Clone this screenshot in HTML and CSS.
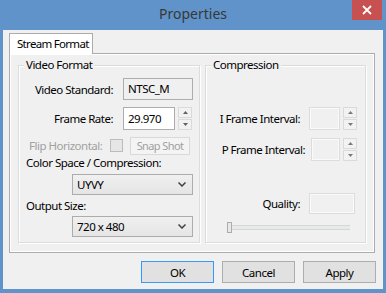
FILE: index.html
```html
<!DOCTYPE html>
<html lang="en">
<head>
    <meta charset="UTF-8">
    <title>Properties</title>
    <link rel="stylesheet" href="styles.css">
</head>
<body>
    <div class="window">
        <div class="titlebar">
            <span class="title">Properties</span>
            <button class="close">
                <svg width="10" height="10" viewBox="0 0 10 10"><path d="M1 1L9 9M9 1L1 9" stroke="#fff" stroke-width="1.8"/></svg>
            </button>
        </div>
        <div class="client">
            <div class="tabs">
                <div class="tab">Stream Format</div>
            </div>
            <div class="panel">
                <fieldset class="group video">
                    <legend>Video Format</legend>
                    <div class="row r-std">
                        <span class="lbl">Video Standard:</span>
                        <span class="box readonly">NTSC_M</span>
                    </div>
                    <div class="row r-rate">
                        <span class="lbl">Frame Rate:</span>
                        <span class="box edit">29.970</span>
                        <span class="spin">
                            <span class="spin-btn"><svg width="5" height="3"><path d="M0 3H5L2.5 0z" fill="#606060"/></svg></span>
                            <span class="spin-btn"><svg width="5" height="3"><path d="M0 0H5L2.5 3z" fill="#606060"/></svg></span>
                        </span>
                    </div>
                    <div class="row r-flip">
                        <span class="lbl dim">Flip Horizontal:</span>
                        <span class="check"></span>
                        <span class="btn small dim">Snap Shot</span>
                    </div>
                    <div class="caption">Color Space / Compression:</div>
                    <div class="combo first">UYVY
                        <svg width="8" height="5"><path d="M0.5 0.5L4 4L7.5 0.5" fill="none" stroke="#404040" stroke-width="1.5"/></svg>
                    </div>
                    <div class="caption out">Output Size:</div>
                    <div class="combo">720 x 480
                        <svg width="8" height="5"><path d="M0.5 0.5L4 4L7.5 0.5" fill="none" stroke="#404040" stroke-width="1.5"/></svg>
                    </div>
                </fieldset>
                <fieldset class="group compression">
                    <legend>Compression</legend>
                    <div class="row r-iframe">
                        <span class="lbl">I Frame Interval:</span>
                        <span class="box off"></span>
                        <span class="spin">
                            <span class="spin-btn"><svg width="5" height="3"><path d="M0 3H5L2.5 0z" fill="#7a7a7a"/></svg></span>
                            <span class="spin-btn"><svg width="5" height="3"><path d="M0 0H5L2.5 3z" fill="#7a7a7a"/></svg></span>
                        </span>
                    </div>
                    <div class="row r-pframe">
                        <span class="lbl">P Frame Interval:</span>
                        <span class="box off"></span>
                        <span class="spin">
                            <span class="spin-btn"><svg width="5" height="3"><path d="M0 3H5L2.5 0z" fill="#7a7a7a"/></svg></span>
                            <span class="spin-btn"><svg width="5" height="3"><path d="M0 0H5L2.5 3z" fill="#7a7a7a"/></svg></span>
                        </span>
                    </div>
                    <div class="row r-quality">
                        <span class="lbl">Quality:</span>
                        <span class="box off"></span>
                    </div>
                    <div class="slider">
                        <span class="thumb"></span>
                    </div>
                </fieldset>
            </div>
            <div class="actions">
                <span class="btn default">OK</span>
                <span class="btn">Cancel</span>
                <span class="btn">Apply</span>
            </div>
        </div>
    </div>
</body>
</html>
```

FILE: styles.css
```css
body {
    margin: 0;
    font-family: "Noto Sans", sans-serif;
    font-size: 11.5px;
    letter-spacing: -0.5px;
    color: #000;
    white-space: nowrap;
}
.window {
    width: 386px;
    height: 293px;
    box-sizing: border-box;
    background: #5f93c9;
    padding: 0 3px 4px 3px;
    display: flex;
    flex-direction: column;
}
.titlebar {
    height: 30px;
    display: grid;
    grid-template-columns: 1fr auto 1fr;
    align-items: start;
}
.title {
    grid-column: 2;
    font-size: 14px;
    letter-spacing: 0;
    line-height: 20px;
    margin-top: 4px;
    color: #383838;
}
.close {
    grid-column: 3;
    justify-self: end;
    width: 30px;
    height: 20px;
    margin-right: 1px;
    padding: 0;
    border: 0;
    background: #c75050;
    display: flex;
    align-items: center;
    justify-content: center;
}
.client {
    flex: 1;
    background: #f0f0f0;
    padding: 3px 7px 0 6px;
}
.tabs {
    display: flex;
    height: 20px;
}
.tab {
    position: relative;
    z-index: 1;
    width: 84px;
    height: 21px;
    box-sizing: border-box;
    background: #fff;
    border: 1px solid #acacac;
    border-bottom: 0;
    padding-left: 7px;
    line-height: 19px;
    letter-spacing: -0.7px;
}
.panel {
    width: 366px;
    height: 200px;
    box-sizing: border-box;
    border: 1px solid #acacac;
    box-shadow: inset 0 0 0 1px #fff;
    display: flex;
    gap: 5px;
    padding: 3px 8px 9px 8px;
}
.group {
    margin: 0;
    padding: 5px 0 0 0;
    min-width: 0;
    border: 1px solid #dcdcdc;
    box-shadow: inset 1px 1px 0 #fff, 1px 1px 0 #fff;
    box-sizing: border-box;
}
.group legend {
    margin-left: 5px;
    padding: 0 2px;
    line-height: 16px;
    background: #f0f0f0;
}
.video {
    width: 182px;
}
.compression {
    width: 161px;
}
.row {
    display: flex;
    align-items: center;
}
.lbl {
    width: 94px;
    text-align: right;
    flex: none;
}
.box {
    box-sizing: border-box;
    flex: none;
    line-height: 20px;
}
.r-std {
    height: 22px;
}
.r-std .lbl, .r-rate .lbl {
    margin-right: 10px;
}
.readonly {
    width: 70px;
    height: 22px;
    border: 1px solid #adadad;
    background: #f0f0f0;
    padding-left: 4px;
}
.r-rate {
    margin-top: 7px;
    height: 23px;
}
.edit {
    width: 52px;
    height: 23px;
    border: 1px solid #abadb3;
    background: #fff;
    padding-left: 4px;
    line-height: 21px;
}
.spin {
    margin-left: 3px;
    width: 14px;
    height: 23px;
    display: flex;
    flex-direction: column;
    gap: 1px;
}
.spin-btn {
    flex: 1;
    border: 1px solid #dadada;
    background: #f2f2f2;
    display: flex;
    align-items: center;
    justify-content: center;
}
.spin-btn svg {
    display: block;
}
.r-flip {
    margin-top: 7px;
    height: 17px;
}
.r-flip .lbl {
    width: 91px;
    box-sizing: border-box;
    padding-left: 10px;
    text-align: left;
}
.dim {
    color: #a0a0a0;
}
.check {
    width: 13px;
    height: 13px;
    box-sizing: border-box;
    border: 1px solid #bcbcbc;
    background: #e6e6e6;
    margin-right: 7px;
}
.btn {
    width: 73px;
    height: 22px;
    box-sizing: border-box;
    border: 1px solid #adadad;
    background: #e1e1e1;
    display: flex;
    align-items: center;
    justify-content: center;
}
.btn.small {
    width: 60px;
    height: 18px;
    border-color: #d9d9d9;
    background: #f4f4f4;
    font-size: 11px;
    letter-spacing: -0.6px;
}
.btn.default {
    border-color: #3399ff;
}
.caption {
    margin-top: 1px;
    padding-left: 7px;
    line-height: 16px;
}
.caption.out {
    margin-top: 3px;
}
.combo {
    margin: 3px 0 0 53px;
    width: 121px;
    height: 21px;
    box-sizing: border-box;
    border: 1px solid #acacac;
    background: linear-gradient(#f0f0f0, #e5e5e5);
    padding: 0 6px 0 4px;
    display: flex;
    align-items: center;
    justify-content: space-between;
}
.combo.first {
    margin-top: 3px;
}
.caption.out + .combo {
    margin-top: 2px;
}
.off {
    height: 23px;
    border: 1px solid #dcdcdc;
    box-shadow: inset 0 0 0 1px #fafafa;
    background: #f0f0f0;
}
.r-iframe {
    margin-top: 29px;
}
.r-iframe .lbl, .r-quality .lbl {
    margin-right: 9px;
}
.r-iframe .off {
    width: 31px;
}
.r-pframe {
    margin-top: 8px;
}
.r-pframe .lbl {
    width: 99px;
    margin-right: 6px;
}
.r-pframe .off {
    width: 29px;
}
.r-quality {
    margin-top: 32px;
}
.r-quality .off {
    width: 46px;
    height: 21px;
}
.slider {
    margin: 8px 0 0 21px;
    width: 123px;
    height: 11px;
    display: flex;
    align-items: center;
    background: linear-gradient(transparent 3px, #d6d6d6 3px, #d6d6d6 4px, #e7eaea 4px, #e7eaea 7px, #d6d6d6 7px, #d6d6d6 8px, transparent 8px);
}
.thumb {
    width: 5px;
    height: 11px;
    box-sizing: border-box;
    border: 1px solid #acacac;
    background: #e8e8e8;
}
.actions {
    margin-top: 8px;
    display: flex;
    justify-content: flex-end;
    gap: 8px;
}
```
